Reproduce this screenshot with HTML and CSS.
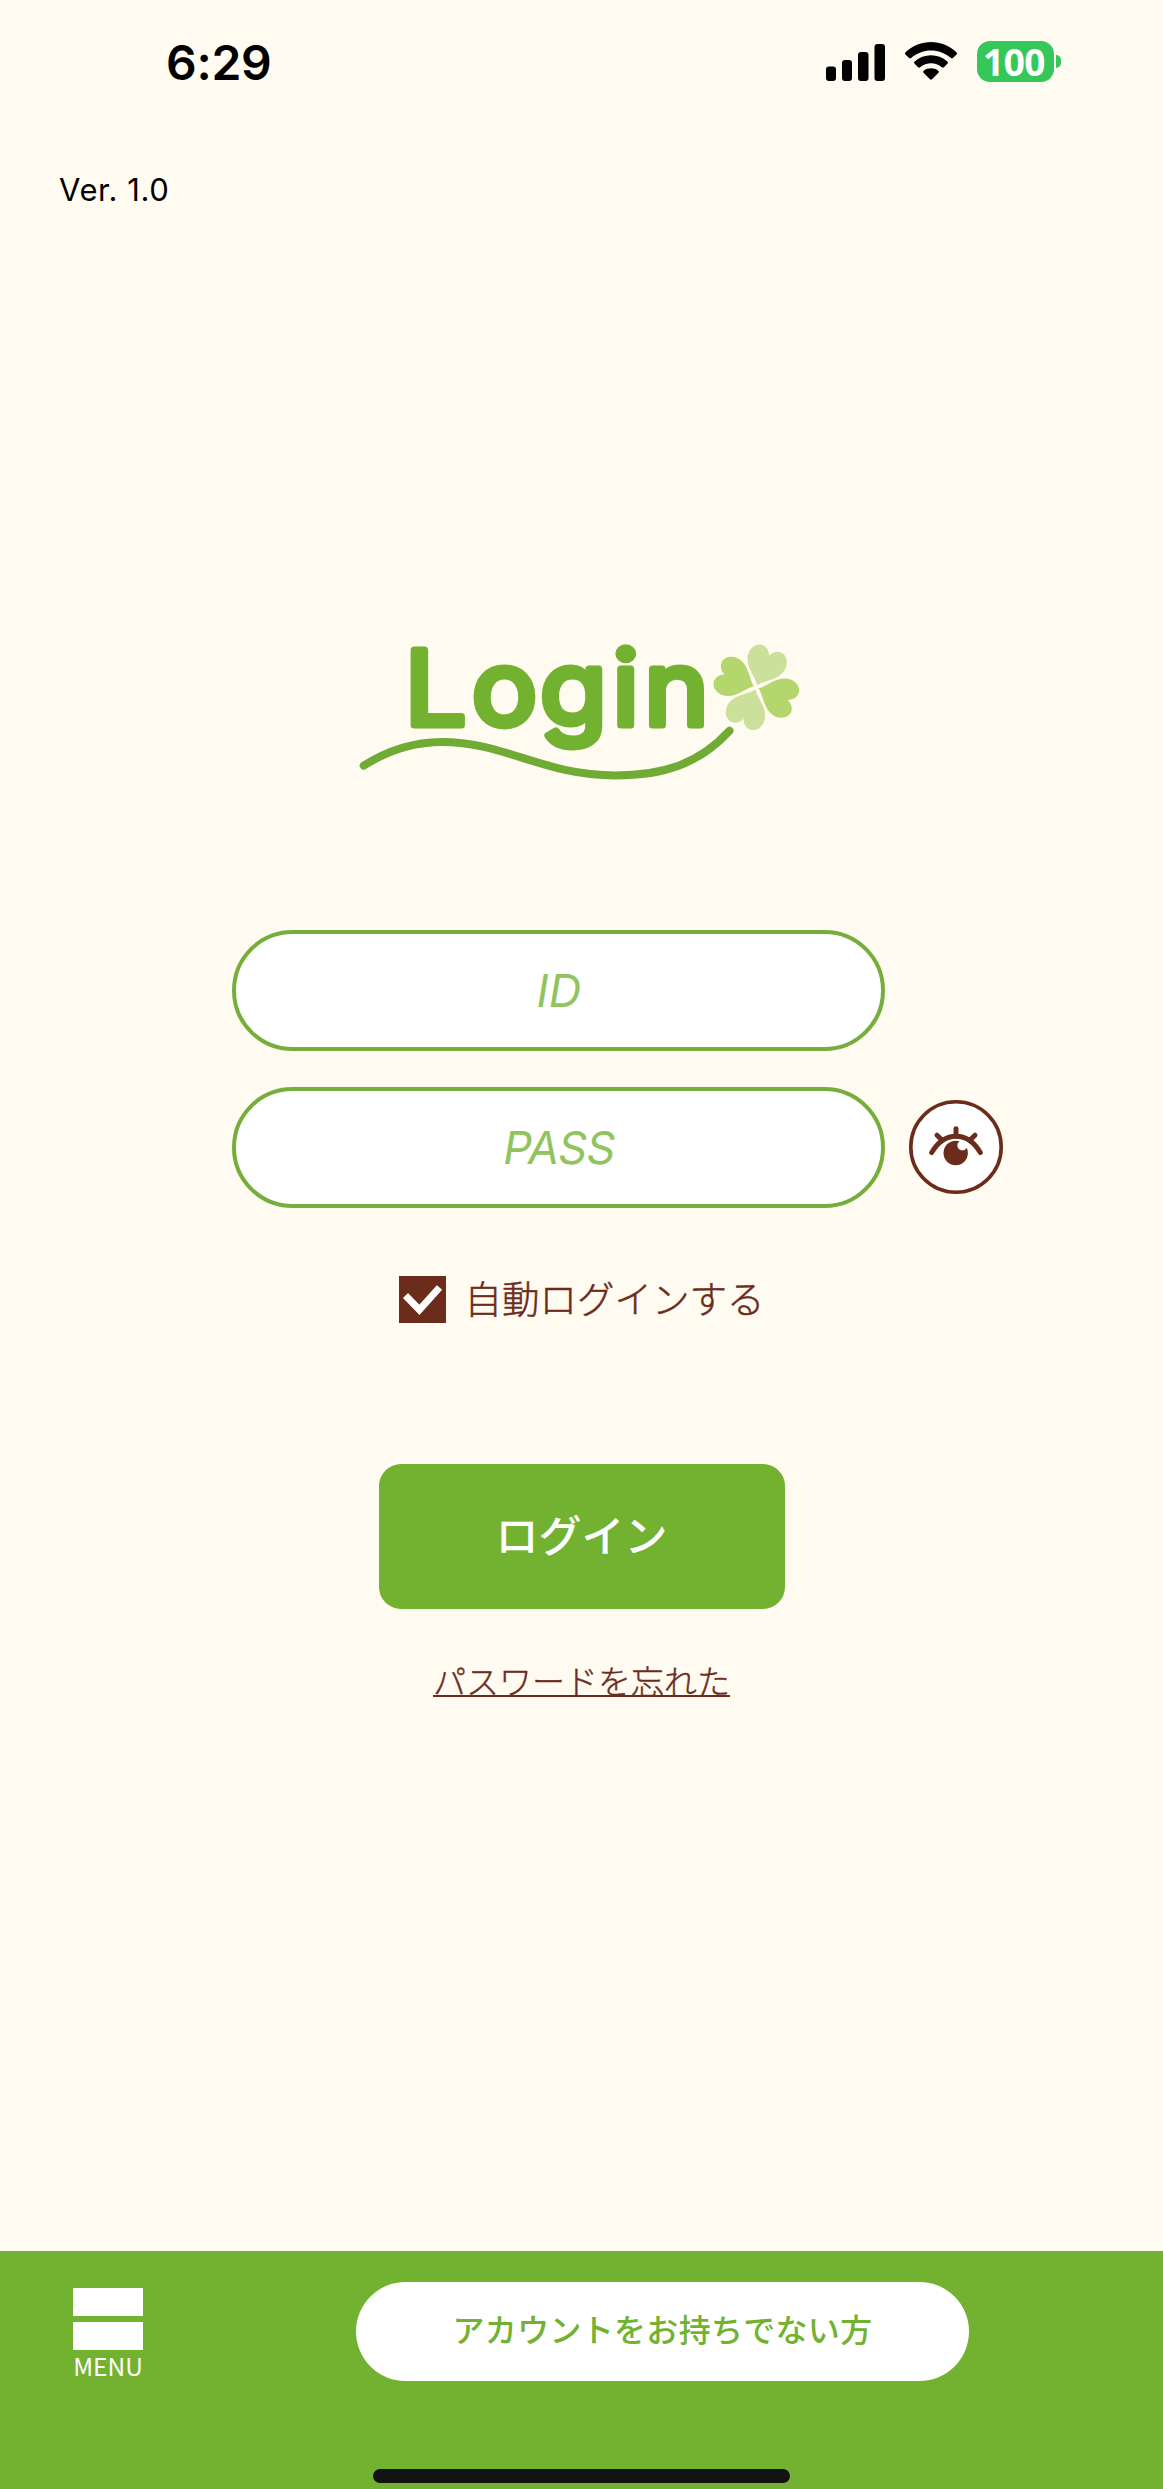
FILE: index.html
```html
<!DOCTYPE html>
<html lang="ja">
<head>
    <meta charset="UTF-8">
    <meta name="viewport" content="width=device-width, initial-scale=1.0">
    <title>Login</title>
    <link rel="stylesheet" href="styles.css">
</head>
<body>

    <div class="status-bar">
        <span class="time">6:29</span>
        <svg class="signal" width="60" height="40" viewBox="0 0 60 40">
            <rect x="0" y="23.5" width="10" height="14.5" rx="3"/>
            <rect x="16" y="17" width="10" height="21" rx="3"/>
            <rect x="32" y="9" width="10.5" height="29" rx="3"/>
            <rect x="48.5" y="1" width="10.5" height="37" rx="3"/>
        </svg>
        <svg class="wifi" width="54" height="40" viewBox="0 0 54 40">
            <path d="M1.4 12.5Q0.4 11.3 1.6 10.2C16 -3.4 38 -3.4 52.4 10.2Q53.6 11.3 52.6 12.5L48.9 16.1Q47.9 17 46.9 16.1C35.5 6 18.5 6 7.1 16.1Q6.1 17 5.1 16.1Z"/>
            <path d="M10.4 21.6Q9.5 20.5 10.6 19.5C20 11.3 34 11.3 43.4 19.5Q44.5 20.5 43.6 21.6L39.9 25.3Q38.9 26.1 37.9 25.3C31.5 20 22.5 20 16.1 25.3Q15.1 26.1 14.1 25.3Z"/>
            <path d="M19.5 30.7Q18.5 29.6 19.7 28.7C24 25.5 30 25.5 34.3 28.7Q35.5 29.6 34.5 30.7L28 37.2Q27 38.1 26 37.2Z"/>
        </svg>
        <div class="battery">
            <span class="battery-level">100</span>
            <span class="battery-cap"></span>
        </div>
    </div>

    <div class="version">Ver. 1.0</div>

    <!-- ロゴ -->
    <svg class="logo" width="480" height="180" viewBox="0 0 480 180">
        <text class="logo-text" transform="scale(1.06 1)" x="61 124.2 188.800 257.200 287" y="105.5">Login</text>
        <path class="logo-line" d="M23.7 145.7C50 129 75 122 101.7 122C165 122 203 155.4 275 155.4C325 155.4 360 143 389.5 110.7"/>
        <g transform="translate(416.3 67.3) rotate(22)">
            <path class="leaf-light" d="M0 -2.5C-4 -9 -20 -16 -20 -29C-20 -36 -15.5 -41.5 -10 -41.5C-5 -41.5 -1.5 -38 0 -34C1.5 -38 5 -41.5 10 -41.5C15.5 -41.5 20 -36 20 -29C20 -16 4 -9 0 -2.5Z"/>
            <path class="leaf" transform="rotate(90)" d="M0 -2.5C-4 -9 -20 -16 -20 -29C-20 -36 -15.5 -41.5 -10 -41.5C-5 -41.5 -1.5 -38 0 -34C1.5 -38 5 -41.5 10 -41.5C15.5 -41.5 20 -36 20 -29C20 -16 4 -9 0 -2.5Z"/>
            <path class="leaf-light" transform="rotate(180)" d="M0 -2.5C-4 -9 -20 -16 -20 -29C-20 -36 -15.5 -41.5 -10 -41.5C-5 -41.5 -1.5 -38 0 -34C1.5 -38 5 -41.5 10 -41.5C15.5 -41.5 20 -36 20 -29C20 -16 4 -9 0 -2.5Z"/>
            <path class="leaf" transform="rotate(270)" d="M0 -2.5C-4 -9 -20 -16 -20 -29C-20 -36 -15.5 -41.5 -10 -41.5C-5 -41.5 -1.5 -38 0 -34C1.5 -38 5 -41.5 10 -41.5C15.5 -41.5 20 -36 20 -29C20 -16 4 -9 0 -2.5Z"/>
        </g>
    </svg>

    <form class="login-form">
        <div class="row">
            <input type="text" class="field" placeholder="ID">
        </div>
        <div class="row">
            <input type="password" class="field pass" placeholder="PASS">
            <button type="button" class="eye-btn">
                <svg width="94" height="94" viewBox="0 0 94 94">
                    <circle cx="47" cy="47" r="45.2" fill="#fff" stroke="#6b2c1b" stroke-width="3.6"/>
                    <path d="M47 28.8V36M28 35.2L33 40M66 35.2L61 40" fill="none" stroke="#6b2c1b" stroke-width="5" stroke-linecap="round"/>
                    <circle cx="46.7" cy="53" r="12.2" fill="#6b2c1b"/>
                    <circle cx="53.4" cy="45.4" r="5" fill="#fff"/>
                    <path d="M50 39.5L62 44L59 48.8L53 46Z" fill="#fff"/>
                    <path d="M22.7 52.5Q32.5 36.3 47 36.3T71.3 52.5" fill="none" stroke="#6b2c1b" stroke-width="5" stroke-linecap="round"/>
                </svg>
            </button>
        </div>

        <label class="auto-login">
            <svg class="check" width="47" height="47" viewBox="0 0 47 47">
                <path d="M6.5 19.5L20.4 33.8L40.5 11.5" fill="none" stroke="#fff" stroke-width="7"/>
            </svg>
            <span class="auto-login-text">自動ログインする</span>
        </label>

        <button type="button" class="login-btn">ログイン</button>
        <a class="forgot">パスワードを忘れた</a>
    </form>

    <div class="footer">
        <div class="menu">
            <span class="menu-bar"></span>
            <span class="menu-bar"></span>
            <span class="menu-text">MENU</span>
        </div>
        <div class="signup">アカウントをお持ちでない方</div>
        <div class="home-bar"></div>
    </div>

</body>
</html>
```

FILE: styles.css
```css
* {
    box-sizing: border-box;
}
body {
    margin: 0;
    height: 2489px;
    display: flex;
    flex-direction: column;
    background-color: #fffbf0;
    font-family: Inter, "Noto Sans CJK JP", sans-serif;
    color: #000;
}
.status-bar {
    display: flex;
    height: 124px;
    padding: 41px 101px 0 166px;
    align-items: flex-start;
}
.time {
    width: 660px;
    font-size: 48px;
    font-weight: 600;
    line-height: 44px;
    letter-spacing: -0.3px;
}
.signal {
    margin-top: 2px;
}
.wifi {
    margin: 1px 0 0 18px;
}
.battery {
    display: flex;
    align-items: center;
    margin-left: 19px;
}
.battery-level {
    width: 77px;
    height: 41px;
    border-radius: 13px;
    background-color: #35c759;
    color: #fff;
    font-family: "Noto Sans", sans-serif;
    font-size: 37px;
    font-weight: 700;
    line-height: 42px;
    text-align: center;
    letter-spacing: -0.5px;
    text-indent: -3px;
}
.battery-cap {
    width: 5px;
    height: 13px;
    margin-left: 2px;
    border-radius: 0 5px 5px 0;
    background-color: #35c759;
}
.version {
    height: 496px;
    padding: 46px 0 0 59px;
    font-size: 31px;
    line-height: 40px;
    letter-spacing: 0.6px;
}
/* ロゴ */
.logo {
    display: block;
    margin-left: 340px;
}
.logo-text {
    font-family: Inter, sans-serif;
    font-size: 103px;
    font-weight: 400;
    fill: #72b230;
    stroke: #72b230;
    stroke-width: 7px;
    stroke-linejoin: round;
}
.logo-line {
    fill: none;
    stroke: #70ab36;
    stroke-width: 8px;
    stroke-linecap: round;
}
.leaf {
    fill: #b3d66d;
}
.leaf-light {
    fill: #cbe09b;
}
/* フォーム */
.login-form {
    display: flex;
    flex-direction: column;
    align-items: center;
    padding-top: 129.5px;
}
.row {
    display: flex;
    align-items: center;
    width: 100%;
    padding-left: 232.4px;
    margin-bottom: 36px;
}
.field {
    width: 653px;
    height: 121px;
    padding: 1px 0 0;
    border: 4px solid #75ae3b;
    border-radius: 61px;
    background-color: #fff;
    font-family: Inter, sans-serif;
    font-size: 45px;
    font-style: italic;
    text-align: center;
}
.field::placeholder {
    color: #91c45e;
    opacity: 1;
}
.pass {
    letter-spacing: -0.7px;
}
.eye-btn {
    width: 94px;
    height: 94px;
    margin-left: 23.5px;
    padding: 0;
    border: none;
    background: none;
}
.eye-btn svg {
    display: block;
}
.auto-login {
    display: flex;
    align-items: center;
    gap: 19px;
    height: 47px;
    margin-top: 32.5px;
    color: #6b2c1b;
    font-family: "Noto Sans CJK JP", sans-serif;
    font-size: 37.5px;
    font-weight: 300;
}
.auto-login-text {
    padding-bottom: 7px;
    -webkit-text-stroke: 0.5px #6b2c1b;
}
.check {
    background-color: #6b2c1b;
}
.login-btn {
    width: 406px;
    height: 145px;
    margin-top: 141px;
    padding: 0 0 8px;
    border: none;
    border-radius: 22px;
    background-color: #72b230;
    color: #fff;
    font-family: "Noto Sans CJK JP", sans-serif;
    font-size: 43px;
    font-weight: 500;
}
.forgot {
    margin-top: 47px;
    color: #6b2c1b;
    font-family: "Noto Sans CJK JP", sans-serif;
    font-size: 33px;
    font-weight: 300;
    line-height: 48px;
    text-decoration: underline;
    text-decoration-thickness: 2px;
    -webkit-text-stroke: 0.4px #6b2c1b;
}
/* フッター */
.footer {
    position: relative;
    display: flex;
    align-items: flex-start;
    height: 238.5px;
    margin-top: auto;
    padding-left: 73px;
    background-color: #72b230;
}
.menu {
    display: flex;
    flex-direction: column;
    align-items: center;
    width: 70px;
    margin-top: 37.5px;
    color: #fff;
}
.menu-bar {
    width: 70px;
    height: 28px;
    margin-bottom: 5.5px;
    background-color: #fff;
}
.menu-text {
    font-family: "Noto Sans CJK JP", sans-serif;
    font-size: 24.5px;
    line-height: 22px;
}
.signup {
    width: 613px;
    height: 99px;
    margin: 31.5px 0 0 213px;
    border-radius: 50px;
    background-color: #fff;
    color: #72b230;
    font-family: "Noto Sans CJK JP", sans-serif;
    font-size: 32px;
    font-weight: 500;
    letter-spacing: 0.3px;
    line-height: 92px;
    text-align: center;
}
.home-bar {
    position: absolute;
    left: 373px;
    bottom: 6px;
    width: 417px;
    height: 14px;
    border-radius: 7px;
    background-color: #131313;
}
```
